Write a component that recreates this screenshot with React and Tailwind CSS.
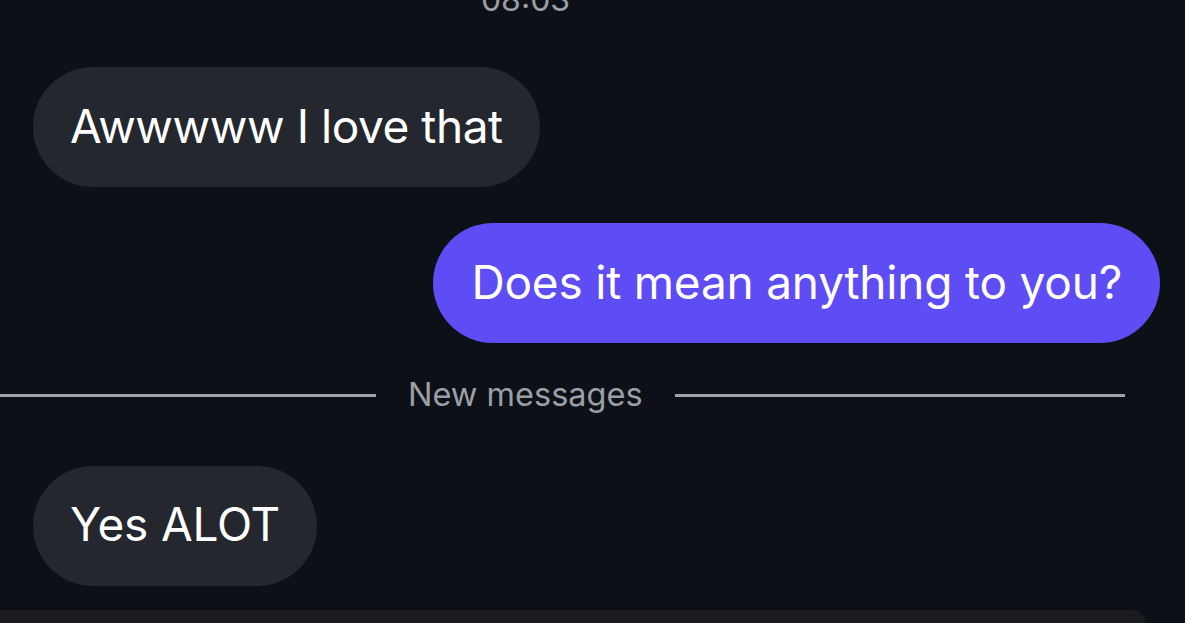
export default function App() {
  return (
    <div
      className="w-[1185px] h-[623px] overflow-hidden bg-[#0d1016] flex flex-col"
      style={{ fontFamily: 'Inter, "Noto Sans", sans-serif' }}
    >
      <div className="h-[14px] flex items-end justify-center pr-[134px]">
        <span className="text-[32px] leading-[32px] text-[#9b9fa6] translate-y-[2px]">08:03</span>
      </div>

      <div className="flex flex-col px-[25px] pl-[33px] pt-[53px]">
        <div className="self-start h-[120px] flex items-center rounded-full bg-[#24272d] px-[37px] pb-[2px] text-white text-[46px] tracking-[-0.45px]">
          Awwwww I love that
        </div>

        <div className="self-end mt-[36px] h-[120px] flex items-center rounded-full bg-[#5e4cf5] px-[38px] pb-[2px] text-white text-[46px] tracking-[-0.2px]">
          Does it mean anything to you?
        </div>
      </div>

      <div className="mt-[36px] flex items-center pr-[60px]">
        <div className="h-[2.5px] w-[376px] bg-[#a0a3a8]" />
        <span className="px-[32px] text-[32.5px] leading-none text-[#9b9fa6]">New messages</span>
        <div className="h-[2.5px] flex-1 bg-[#a0a3a8]" />
      </div>

      <div className="pl-[33px] mt-[54px]">
        <div className="inline-flex h-[120px] items-center rounded-full bg-[#24272d] px-[37px] pb-[2px] text-white text-[46px] tracking-[-0.2px]">
          Yes ALOT
        </div>
      </div>

      <div className="mt-[24px] mr-[40px] h-[40px] rounded-tr-[40px] bg-[#1b1c1f]" />
    </div>
  );
}
